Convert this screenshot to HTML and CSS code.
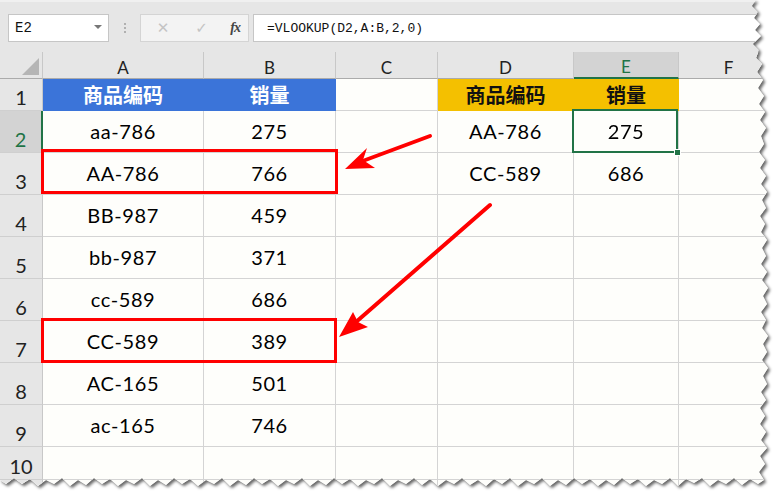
FILE: index.html
```html
<!DOCTYPE html>
<html>
<head>
<meta charset="utf-8">
<link rel="stylesheet" href="styles.css">
</head>
<body>
<div class="frame">
  <div class="sheet">
    <div class="toolbar">
      <div class="namebox"><span class="ref">E2</span><span class="caret"></span></div>
      <div class="dots"><i></i><i></i><i></i></div>
      <div class="fxbox">
        <span class="btn">✕</span>
        <span class="btn">✓</span>
        <span class="fx">fx</span>
      </div>
      <div class="formula">=VLOOKUP(D2,A:B,2,0)</div>
    </div>
    <div class="grid">
      <div class="corner"><span class="tri"></span></div>
      <div class="ch">A</div><div class="ch">B</div><div class="ch">C</div><div class="ch">D</div><div class="ch sel">E</div><div class="ch">F</div>

      <div class="rh">1</div>
      <div class="c hd blue">商品编码</div><div class="c hd blue">销量</div><div class="c"></div>
      <div class="c hd gold">商品编码</div><div class="c hd gold">销量</div><div class="c"></div>

      <div class="rh sel">2</div>
      <div class="c">aa-786</div><div class="c">275</div><div class="c"></div>
      <div class="c">AA-786</div><div class="c active">275<span class="handle"></span></div><div class="c"></div>

      <div class="rh">3</div>
      <div class="c">AA-786</div><div class="c">766</div><div class="c"></div>
      <div class="c">CC-589</div><div class="c">686</div><div class="c"></div>

      <div class="rh">4</div>
      <div class="c">BB-987</div><div class="c">459</div><div class="c"></div>
      <div class="c"></div><div class="c"></div><div class="c"></div>

      <div class="rh">5</div>
      <div class="c">bb-987</div><div class="c">371</div><div class="c"></div>
      <div class="c"></div><div class="c"></div><div class="c"></div>

      <div class="rh">6</div>
      <div class="c">cc-589</div><div class="c">686</div><div class="c"></div>
      <div class="c"></div><div class="c"></div><div class="c"></div>

      <div class="rh">7</div>
      <div class="c">CC-589</div><div class="c">389</div><div class="c"></div>
      <div class="c"></div><div class="c"></div><div class="c"></div>

      <div class="rh">8</div>
      <div class="c">AC-165</div><div class="c">501</div><div class="c"></div>
      <div class="c"></div><div class="c"></div><div class="c"></div>

      <div class="rh">9</div>
      <div class="c">ac-165</div><div class="c">746</div><div class="c"></div>
      <div class="c"></div><div class="c"></div><div class="c"></div>

      <div class="rh">10</div>
      <div class="c"></div><div class="c"></div><div class="c"></div>
      <div class="c"></div><div class="c"></div><div class="c"></div>

      <div class="rh"></div>
      <div class="c"></div><div class="c"></div><div class="c"></div>
      <div class="c"></div><div class="c"></div><div class="c"></div>
    </div>
    <svg class="marks" width="779" height="498" viewBox="0 0 779 498">
      <rect x="42.5" y="150.5" width="294" height="42" fill="none" stroke="#ff0000" stroke-width="3"/>
      <rect x="42.5" y="319.5" width="293" height="42" fill="none" stroke="#ff0000" stroke-width="3"/>
      <line x1="430" y1="136" x2="360" y2="162" stroke="#ff0000" stroke-width="4" stroke-linecap="round"/>
      <polygon points="345,169 367,148 363,160 375,168" fill="#ff0000"/>
      <line x1="490" y1="205" x2="356" y2="322" stroke="#ff0000" stroke-width="4" stroke-linecap="round"/>
      <polygon points="339,337 353,312 358,322 368,327" fill="#ff0000"/>
    </svg>
  </div>
</div>
</body>
</html>
```
FILE: styles.css
```css
html, body {
  margin: 0;
  background: #ffffff;
}

.frame {
  width: 779px;
  height: 498px;
  filter: drop-shadow(2px 2px 1.5px rgba(0, 0, 0, 0.6));
}

.sheet {
  position: relative;
  width: 779px;
  height: 498px;
  background: #e6e6e6;
  font-family: Lato, "Noto Sans CJK SC", sans-serif;
  clip-path: polygon(0 0, 756px 0, 752px 6px, 758px 12px, 754px 18px, 760px 24px, 755px 30px, 761px 36px, 753px 44px, 759px 50px, 756px 58px, 762px 64px, 757px 72px, 763px 80px, 758px 88px, 764px 96px, 759px 104px, 765px 112px, 760px 120px, 766px 128px, 761px 136px, 764px 144px, 759px 152px, 765px 160px, 760px 168px, 766px 176px, 761px 184px, 767px 192px, 762px 200px, 766px 208px, 760px 216px, 765px 224px, 761px 232px, 767px 240px, 762px 248px, 766px 256px, 761px 264px, 767px 272px, 762px 280px, 768px 288px, 763px 296px, 767px 304px, 761px 312px, 766px 320px, 762px 328px, 768px 336px, 763px 344px, 767px 352px, 762px 360px, 768px 368px, 763px 376px, 767px 384px, 761px 392px, 766px 400px, 760px 408px, 765px 416px, 760px 424px, 766px 432px, 761px 440px, 767px 448px, 760px 456px, 765px 464px, 759px 472px, 764px 480px, 758px 484px, 750px 479px, 742px 485px, 734px 478px, 726px 484px, 718px 480px, 710px 486px, 702px 478px, 694px 483px, 686px 479px, 678px 486px, 670px 478px, 662px 484px, 654px 480px, 646px 486px, 638px 479px, 630px 484px, 622px 478px, 614px 485px, 606px 480px, 598px 486px, 590px 479px, 582px 484px, 574px 478px, 566px 485px, 558px 480px, 550px 486px, 542px 478px, 534px 484px, 526px 480px, 518px 486px, 510px 478px, 502px 484px, 494px 479px, 486px 486px, 478px 480px, 470px 485px, 462px 478px, 454px 484px, 446px 480px, 438px 486px, 430px 479px, 422px 485px, 414px 478px, 406px 484px, 398px 480px, 390px 486px, 382px 478px, 374px 484px, 366px 480px, 358px 486px, 350px 479px, 342px 484px, 334px 478px, 326px 485px, 318px 480px, 310px 486px, 302px 478px, 294px 484px, 286px 480px, 278px 486px, 270px 479px, 262px 484px, 254px 478px, 246px 485px, 238px 480px, 230px 486px, 222px 478px, 214px 484px, 206px 480px, 198px 486px, 190px 479px, 182px 484px, 174px 478px, 166px 485px, 158px 480px, 150px 486px, 142px 478px, 134px 484px, 126px 480px, 118px 486px, 110px 479px, 102px 484px, 94px 478px, 86px 485px, 78px 480px, 70px 486px, 62px 478px, 54px 484px, 46px 480px, 38px 486px, 30px 479px, 22px 484px, 14px 478px, 6px 484px, 0 480px);
}

/* ---------- toolbar ---------- */
.toolbar {
  height: 52px;
  box-sizing: border-box;
  padding: 12px 0 0 8px;
  display: flex;
  align-items: flex-start;
  border-top: 2px solid #f0f0f0;
}

.namebox {
  width: 101px;
  height: 28px;
  box-sizing: border-box;
  background: #ffffff;
  border: 1px solid #c6c6c6;
  display: flex;
  align-items: center;
  justify-content: space-between;
  padding: 0 6px 0 6px;
}

.ref {
  font-family: "Liberation Mono", monospace;
  font-size: 14px;
  color: #111;
}

.caret {
  width: 0;
  height: 0;
  border-left: 4px solid transparent;
  border-right: 4px solid transparent;
  border-top: 4px solid #777;
  margin-top: -2px;
}

.dots {
  width: 31px;
  height: 28px;
  display: flex;
  flex-direction: column;
  align-items: center;
  justify-content: center;
  gap: 2px;
}

.dots i {
  display: block;
  width: 2px;
  height: 2px;
  background: #b0b0b0;
}

.fxbox {
  width: 109px;
  height: 28px;
  box-sizing: border-box;
  background: #f3f3f3;
  border: 1px solid #d4d4d4;
  display: flex;
  align-items: center;
  padding: 0 8px 0 12px;
  justify-content: space-between;
}

.btn {
  font-family: "DejaVu Sans", sans-serif;
  font-size: 15px;
  color: #c4c4c4;
  width: 20px;
  text-align: center;
}

.fx {
  font-family: "Liberation Serif", serif;
  font-style: italic;
  font-size: 14px;
  font-weight: bold;
  color: #444;
  letter-spacing: -1px;
}

.formula {
  flex: 1;
  margin-left: 4px;
  height: 28px;
  box-sizing: border-box;
  background: #ffffff;
  border: 1px solid #c6c6c6;
  border-right: none;
  font-family: "Liberation Mono", monospace;
  font-size: 13px;
  color: #111;
  display: flex;
  align-items: center;
  padding-left: 13px;
}

/* ---------- grid ---------- */
.grid {
  display: grid;
  grid-template-columns: 43px 161px 132px 102px 136px 105px 1fr;
  grid-template-rows: 27px 32px repeat(8, 42px) 33px 42px;
  background: #fefefb;
}

.grid > div {
  box-sizing: border-box;
  border-right: 1px solid #d4d4d4;
  border-bottom: 1px solid #d4d4d4;
}

.corner {
  position: relative;
  background: #e6e6e6;
  border-bottom-color: #ababab !important;
  border-right-color: #c8c8c8 !important;
}

.tri {
  position: absolute;
  right: 3px;
  bottom: 3px;
  width: 0;
  height: 0;
  border-left: 17px solid transparent;
  border-bottom: 17px solid #b5b5b5;
}

.ch {
  background: #e6e6e6;
  border-right-color: #c8c8c8 !important;
  border-bottom-color: #ababab !important;
  display: flex;
  align-items: flex-end;
  justify-content: center;
  font-size: 17px;
  color: #222;
  padding-bottom: 2px;
  line-height: 1;
}

.ch.sel {
  background: #d3d3d3;
  color: #217346;
  border-bottom: 2px solid #217346 !important;
}

.rh {
  background: #e6e6e6;
  border-right-color: #c8c8c8 !important;
  border-bottom-color: #cfcfcf !important;
  display: flex;
  align-items: flex-end;
  justify-content: center;
  font-size: 20px;
  color: #222;
  line-height: 1;
  padding-bottom: 3px;
}

.rh.sel {
  background: #d3d3d3;
  color: #217346;
  border-right: 2px solid #217346 !important;
}

.c {
  display: flex;
  align-items: center;
  justify-content: center;
  font-size: 20px;
  color: #000;
  letter-spacing: 0.6px;
  padding-bottom: 2px;
}

.hd {
  font-family: "Noto Sans CJK SC", sans-serif;
  font-weight: bold;
  font-size: 20px;
  letter-spacing: 0;
  padding-bottom: 0;
}

.blue {
  background: #3b74d9;
  color: #ffffff;
  border-right-color: #3b74d9 !important;
  border-bottom-color: #3b74d9 !important;
}

.gold {
  background: #f4c000;
  color: #111;
  border-right-color: #f4c000 !important;
  border-bottom-color: #f4c000 !important;
}

.active {
  position: relative;
}

.active::after {
  content: "";
  position: absolute;
  left: -2px;
  top: -2px;
  right: 0;
  bottom: -1px;
  border: 2px solid #217346;
}

.handle {
  position: absolute;
  right: -3px;
  bottom: -4px;
  width: 5px;
  height: 5px;
  background: #217346;
  border: 1px solid #ffffff;
  z-index: 2;
}

.marks {
  position: absolute;
  left: 0;
  top: 0;
  pointer-events: none;
}
```
